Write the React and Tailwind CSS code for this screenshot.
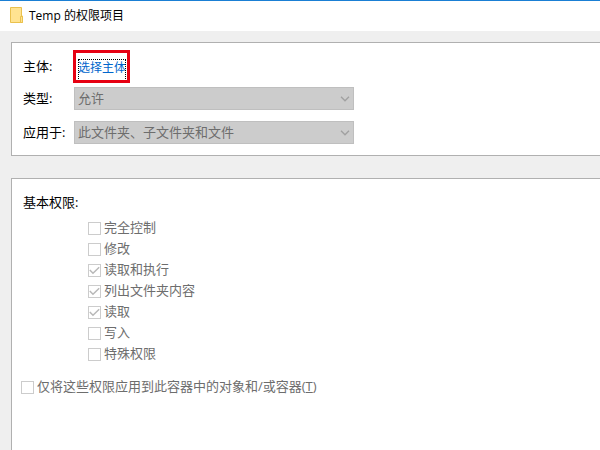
import { useState } from 'react';

const basicPermissions = [
  { id: 'full', label: '完全控制', checked: false },
  { id: 'modify', label: '修改', checked: false },
  { id: 'read-execute', label: '读取和执行', checked: true },
  { id: 'list', label: '列出文件夹内容', checked: true },
  { id: 'read', label: '读取', checked: true },
  { id: 'write', label: '写入', checked: false },
  { id: 'special', label: '特殊权限', checked: false },
];

function FolderIcon() {
  return (
    <svg width="13" height="16" viewBox="0 0 13 16" aria-hidden="true">
      <path d="M.5.5h11v8.5h1v6.5H.5z" fill="#ffe391" stroke="#eac14d" />
      <path d="M10.5 15.5V9.5h2v6z" fill="#ffe391" stroke="#eac14d" />
    </svg>
  );
}

function Dropdown({ id, options }) {
  return (
    <div className="ml-px grid w-[280px] items-center">
      <select
        id={id}
        disabled
        className="col-start-1 row-start-1 h-[23px] w-full appearance-none border border-[#bfbfbf] bg-[#cccccc] pb-0.5 pl-[3px] text-[13px] leading-5 text-[#6d6d6d] opacity-100"
      >
        {options.map((option) => (
          <option key={option}>{option}</option>
        ))}
      </select>
      <svg
        className="pointer-events-none col-start-1 row-start-1 mr-1 justify-self-end"
        width="10"
        height="6"
        viewBox="0 0 10 6"
        fill="none"
        stroke="#a0a0a0"
        strokeWidth="1.3"
        aria-hidden="true"
      >
        <path d="M1 .8l4 4 4-4" />
      </svg>
    </div>
  );
}

function Checkbox({ id, checked, children }) {
  return (
    <div className="flex h-[21px] items-center gap-[3px]">
      <span className="grid">
        <input
          id={id}
          type="checkbox"
          checked={checked}
          readOnly
          disabled
          className="col-start-1 row-start-1 size-[13px] appearance-none border border-[#cccccc] bg-white"
        />
        {checked && (
          <svg
            className="pointer-events-none col-start-1 row-start-1"
            width="13"
            height="13"
            viewBox="0 0 13 13"
            fill="none"
            stroke="#b8b8b8"
            strokeWidth="1.5"
            aria-hidden="true"
          >
            <path d="M1.8 6l3.2 3.3 6.2-6" />
          </svg>
        )}
      </span>
      <label htmlFor={id} className="pb-[3px] leading-[18px] text-[#6d6d6d]">
        {children}
      </label>
    </div>
  );
}

export default function App() {
  const [permissions] = useState(basicPermissions);

  return (
    <div className="flex min-h-screen flex-col border-t border-[#1a7fd4] bg-[#efefef] font-['Open_Sans','Noto_Sans_CJK_SC',sans-serif] text-[13px] text-black">
      <header className="flex h-[30px] items-center gap-1.5 bg-white pb-0.5 pl-2.5">
        <FolderIcon />
        <h1 className="pt-0.5 text-xs">Temp 的权限项目</h1>
      </header>

      <section className="mt-[11px] ml-[11px] border-y border-l border-[#b0b0b0] bg-white pt-[7px] pb-[11px] pl-[11px]">
        <div className="flex items-center">
          <span className="w-[50px]">主体:</span>
          <div className="h-[33px] overflow-hidden border-3 border-[#e60012] pt-1.5 pr-px pl-0.5">
            <a
              href="#principal"
              className="block h-6 text-xs leading-[17px] text-[#0066cc] outline-1 -outline-offset-1 outline-black outline-dotted"
            >
              选择主体
            </a>
          </div>
        </div>
        <div className="mt-1 flex items-center">
          <label htmlFor="type" className="w-[50px]">
            类型:
          </label>
          <Dropdown id="type" options={['允许', '拒绝']} />
        </div>
        <div className="mt-[11px] flex items-center">
          <label htmlFor="applies-to" className="w-[50px]">
            应用于:
          </label>
          <Dropdown
            id="applies-to"
            options={['此文件夹、子文件夹和文件', '只有该文件夹']}
          />
        </div>
      </section>

      <section className="mt-[22px] ml-[11px] grow border-t border-l border-[#b0b0b0] bg-white pt-[13px] pl-[9px]">
        <h2 className="pl-0.5 leading-5">基本权限:</h2>
        <div className="mt-1.5 ml-[67px]">
          {permissions.map(({ id, label, checked }) => (
            <Checkbox key={id} id={id} checked={checked}>
              {label}
            </Checkbox>
          ))}
        </div>
        <div className="mt-3">
          <Checkbox id="apply-only" checked={false}>
            仅将这些权限应用到此容器中的对象和/或容器(<u>T</u>)
          </Checkbox>
        </div>
      </section>
    </div>
  );
}
